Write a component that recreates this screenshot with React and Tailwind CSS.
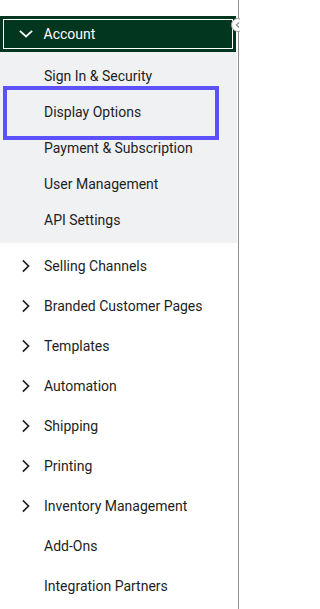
import React from "react";

const ChevronRight = () => (
  <svg width="24" height="24" viewBox="0 0 24 24" fill="none" className="shrink-0">
    <path d="M9.5 7 L14.5 12 L9.5 17" stroke="#1f1f1f" strokeWidth="1.7" strokeLinecap="square" strokeLinejoin="miter" />
  </svg>
);

const ChevronDown = () => (
  <svg width="24" height="24" viewBox="0 0 24 24" fill="none" className="shrink-0">
    <path d="M6.5 9.5 L12 14.5 L17.5 9.5" stroke="#ffffff" strokeWidth="1.7" strokeLinecap="square" />
  </svg>
);

const subItems = [
  "Sign In & Security",
  "Display Options",
  "Payment & Subscription",
  "User Management",
  "API Settings",
];

const topItems = [
  { label: "Selling Channels", chevron: true },
  { label: "Branded Customer Pages", chevron: true },
  { label: "Templates", chevron: true },
  { label: "Automation", chevron: true },
  { label: "Shipping", chevron: true },
  { label: "Printing", chevron: true },
  { label: "Inventory Management", chevron: true },
  { label: "Add-Ons", chevron: false },
  { label: "Integration Partners", chevron: false },
];

export default function App() {
  return (
    <div
      className="relative w-[240px] h-[609px] bg-white overflow-hidden text-[14px] text-[#1e1e1e]"
      style={{ fontFamily: "Roboto, 'Liberation Sans', sans-serif" }}
    >
      <div className="w-[239px] h-full border-r border-[#8f8f8f] pt-[16px]">
        {/* Header */}
        <div className="w-[236px] h-[36px] bg-[#02361f] p-[3px]">
          <div className="h-full border-[1.5px] border-white flex items-center pl-[9.5px] gap-[6px] text-white text-[14px]">
            <ChevronDown />
            <span>Account</span>
          </div>
        </div>

        {/* Sub panel */}
        <div className="w-[237px] bg-[#f0f1f3] pt-[6px] pb-[5px]">
          {subItems.map((s, i) => (
            <div key={s} className="relative h-[36px] flex items-center pl-[44px]">
              {i === 1 && (
                <div className="absolute left-[3px] top-[-8px] w-[216px] h-[54px] border-[4.5px] border-[#5d50fd]" />
              )}
              <span>{s}</span>
            </div>
          ))}
        </div>

        {/* Top-level items */}
        <div className="pt-[3px]">
          {topItems.map((it) => (
            <div key={it.label} className="h-[40px] flex items-center pl-[14px] gap-[6px]">
              {it.chevron ? <ChevronRight /> : <span className="w-[24px] shrink-0" />}
              <span>{it.label}</span>
            </div>
          ))}
        </div>
      </div>

      {/* collapse button */}
      <div className="absolute left-[231px] top-[18px] w-[14px] h-[14px] rounded-full bg-white border border-[#a0a0a0] flex items-center justify-start pl-[2px]">
        <svg width="8" height="8" viewBox="0 0 8 8" fill="none">
          <path d="M5 1.5 L2.5 4 L5 6.5" stroke="#9a9a9a" strokeWidth="1.4" />
        </svg>
      </div>
    </div>
  );
}
